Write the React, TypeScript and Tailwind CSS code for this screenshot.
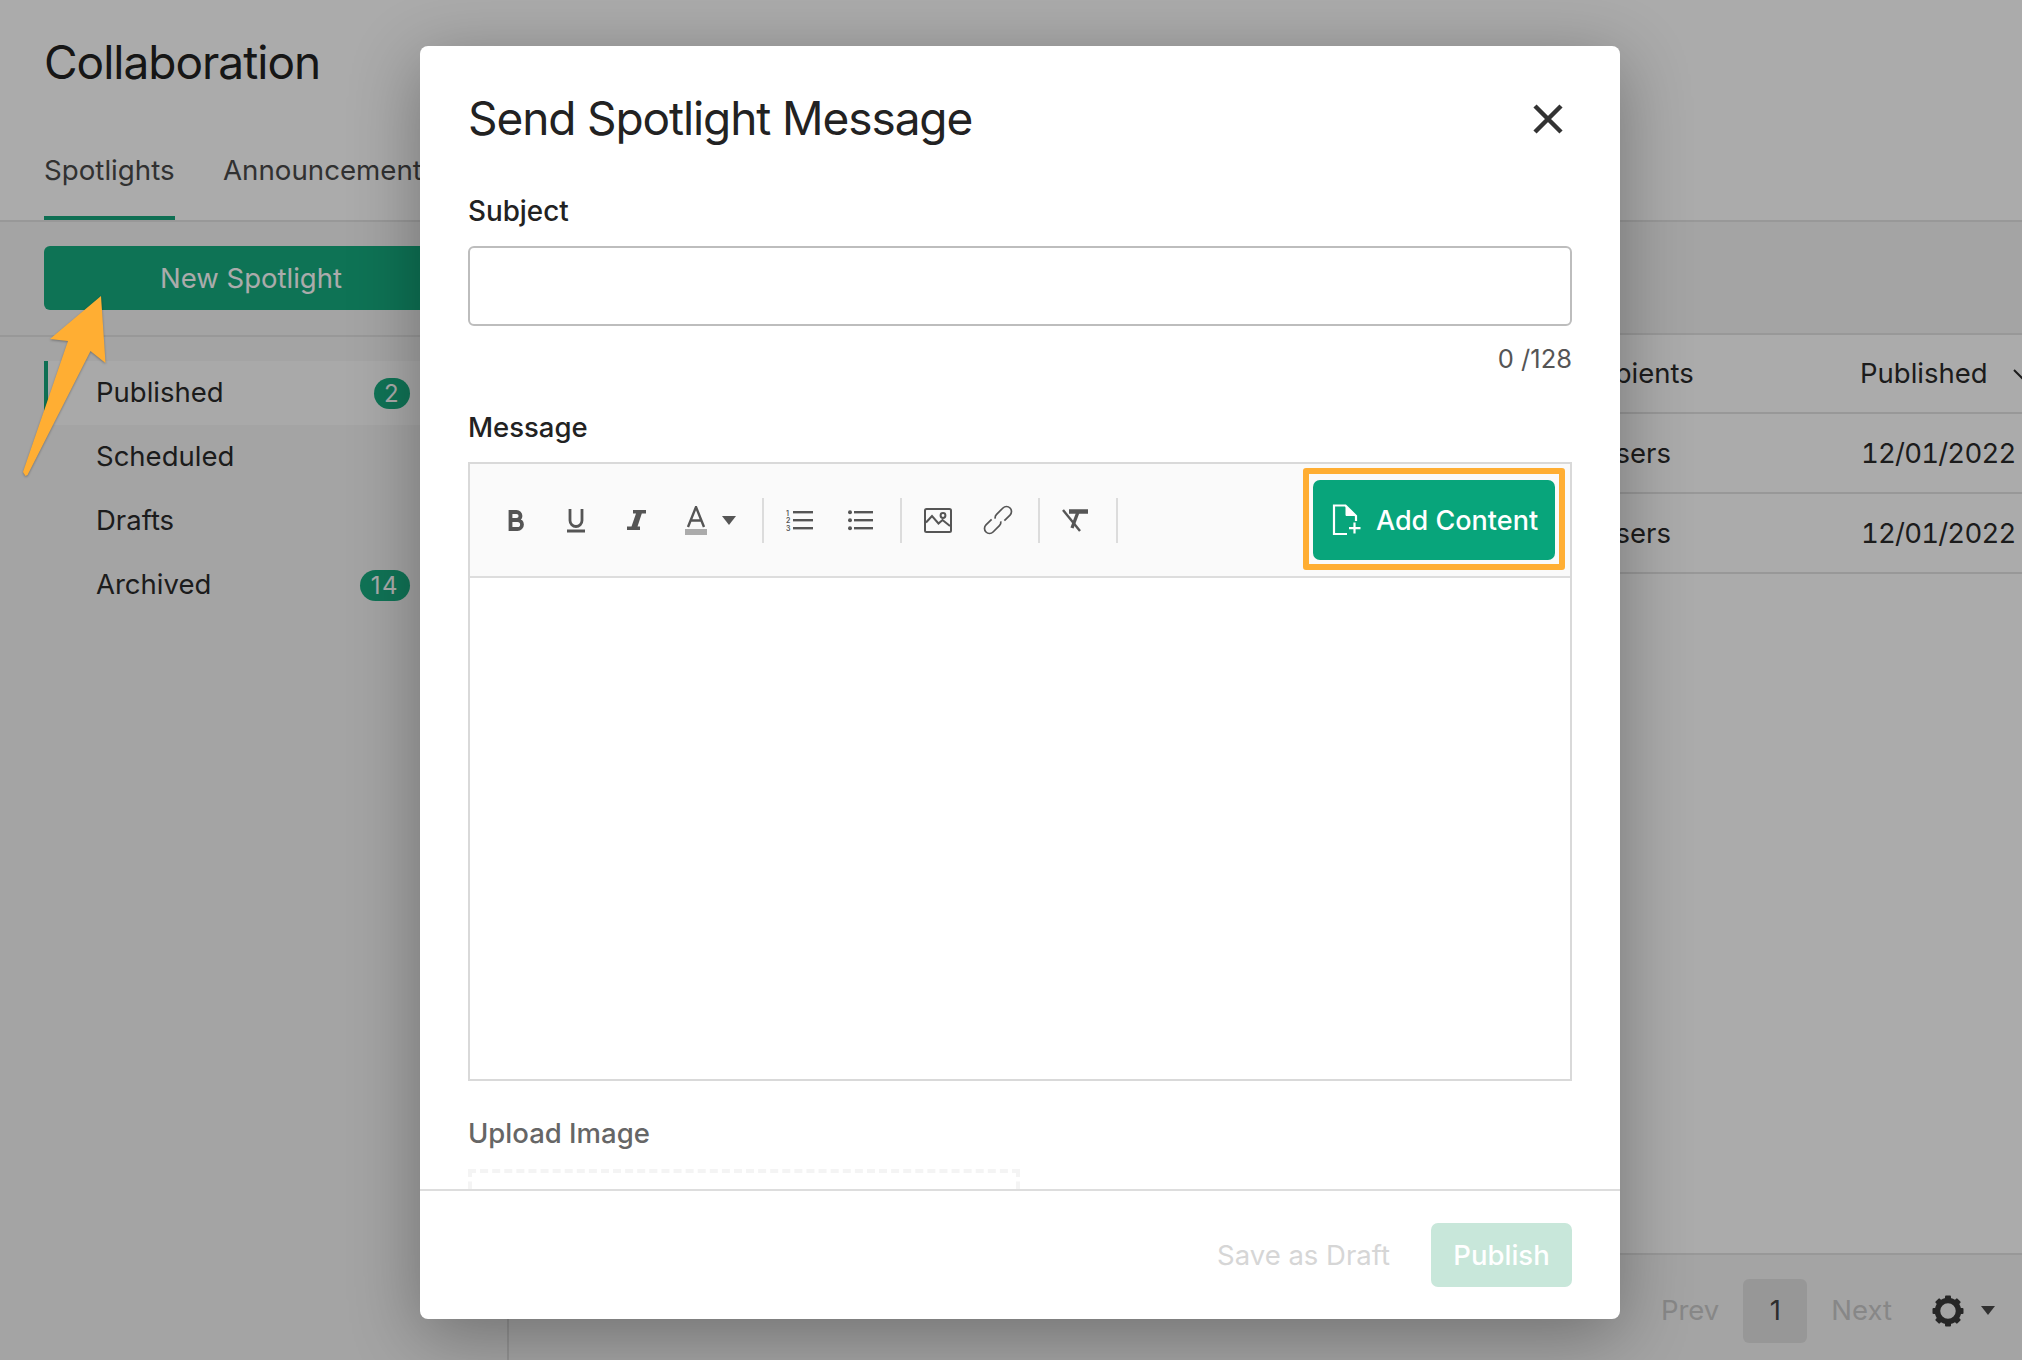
const ink = '#555555'

function Sep() {
  return <div className="w-[2px] h-[45px] bg-[#dcdcdc]" />
}

function Slot({ children, w = 'w-[60px]' }: { children: React.ReactNode; w?: string }) {
  return <div className={'flex items-center justify-center ' + w}>{children}</div>
}

function FormatButtons() {
  return (
    <div className="flex items-center h-[45px] pl-[16px] pr-[10px]">
      <Slot>
        <svg className="ml-[2px]" width="18" height="21" viewBox="0 0 18 21" fill="none" stroke={ink} strokeWidth="3.8">
          <path d="M2.500 2h6a3.900 3.900 0 0 1 0 8h-6zM2.500 10h7a4.500 4.500 0 0 1 0 9h-7z" />
        </svg>
      </Slot>
      <Slot>
        <svg width="20" height="25" viewBox="0 0 20 25" fill="none" stroke={ink}>
          <path d="M4 1v11.500a6 6 0 0 0 12 0V1" strokeWidth="2.800" />
          <path d="M1 23h18" strokeWidth="3" />
        </svg>
      </Slot>
      <Slot>
        <svg width="19" height="20" viewBox="0 0 19 20" fill={ink}>
          <path d="M6 0h13v3.500h-4.200L10.500 16.500H13V20H0v-3.500h4.500L9 3.500H6z" />
        </svg>
      </Slot>
      <Slot w="w-[86px]">
        <div className="flex items-center gap-[15px] pl-[2px]">
          <svg width="22" height="29" viewBox="0 0 22 29" fill="none">
            <path d="M3 21 11 1l8 20M6 14.500h10" stroke={ink} strokeWidth="2.400" />
            <rect x="0" y="23" width="22" height="6" fill="#ababab" />
          </svg>
          <svg width="14" height="9" viewBox="0 0 14 9" fill={ink}>
            <path d="M0 0h14L7 9z" />
          </svg>
        </div>
      </Slot>
    </div>
  )
}

function ListButtons() {
  return (
    <div className="flex items-center h-[45px] pl-[5px] pr-[9px]">
      <Slot>
        <svg width="27" height="22" viewBox="0 0 27 22" fill={ink}>
          <text x="0" y="6.500" fontSize="7" fontFamily="Inter, sans-serif" fontWeight="600">1</text>
          <text x="0" y="14" fontSize="7" fontFamily="Inter, sans-serif" fontWeight="600">2</text>
          <text x="0" y="21.500" fontSize="7" fontFamily="Inter, sans-serif" fontWeight="600">3</text>
          <rect x="7" y="2" width="20" height="2.400" />
          <rect x="7" y="10" width="20" height="2.400" />
          <rect x="7" y="18" width="20" height="2.400" />
        </svg>
      </Slot>
      <Slot w="w-[62px]">
        <svg width="25" height="22" viewBox="0 0 25 22" fill={ink}>
          <circle cx="2" cy="3.200" r="2" />
          <circle cx="2" cy="11.200" r="2" />
          <circle cx="2" cy="19.200" r="2" />
          <rect x="6" y="2" width="19" height="2.400" />
          <rect x="6" y="10" width="19" height="2.400" />
          <rect x="6" y="18" width="19" height="2.400" />
        </svg>
      </Slot>
    </div>
  )
}

function InsertButtons() {
  return (
    <div className="flex items-center h-[45px] pl-[6px] pr-[10px]">
      <Slot>
        <svg width="28" height="25" viewBox="0 0 28 25" fill="none" stroke={ink} strokeWidth="2">
          <rect x="1" y="1" width="26" height="23" rx="1.500" />
          <path d="M2 14.500 8 8l6.500 7.500 4-3.500L26 18" />
          <circle cx="19" cy="7.500" r="2.400" />
        </svg>
      </Slot>
      <Slot>
        <svg className="overflow-visible" width="30" height="30" viewBox="0 0 30 30" fill="none" stroke={ink} strokeWidth="1.700">
          <g transform="rotate(-45 15 15)">
            <path d="M11 10H3a5 5 0 0 0 0 10h9a5 5 0 0 0 4-2" />
            <path d="M19 20h8a5 5 0 0 0 0-10h-9a5 5 0 0 0-4 2" />
          </g>
        </svg>
      </Slot>
    </div>
  )
}

function ClearButton() {
  return (
    <div className="flex items-center h-[45px] pl-[5px] pr-[11px]">
      <Slot>
        <svg width="26" height="23" viewBox="0 0 26 23" fill="none" stroke={ink}>
          <path d="M7 2.500h19" strokeWidth="4.500" />
          <path d="M16 3 10 19" strokeWidth="3.400" />
          <path d="M1 1 18 22" strokeWidth="2.400" />
        </svg>
      </Slot>
    </div>
  )
}

function FileAdd() {
  return (
    <svg width="30" height="32" viewBox="0 0 30 32" fill="none" stroke="#ffffff" strokeWidth="2.200">
      <path d="M15 30H2V1.500h11.500L24 12v5" />
      <path d="M14 2v9.500h9z" fill="#ffffff" strokeWidth="1" />
      <path d="M22.500 18.500v11M17 24.200h11.500" />
    </svg>
  )
}

function Gear() {
  const teeth = [0, 45, 90, 135, 180, 225, 270, 315]
  return (
    <svg width="34" height="34" viewBox="0 0 34 34" fill="none">
      <circle cx="17" cy="17" r="10.500" stroke="#3a3a3a" strokeWidth="5.500" />
      {teeth.map(a => (
        <rect key={a} x="14" y="1.500" width="6" height="5" rx="1" fill="#3a3a3a" transform={`rotate(${a} 17 17)`} />
      ))}
    </svg>
  )
}

function NavRow({ label, count, active }: { label: string; count?: string; active?: boolean }) {
  return (
    <div className={'flex items-center h-[64px] pl-[48px] pr-[97px] text-[27.500px] text-[#2b2b2b] border-l-[4px] ' + (active ? 'bg-[#fdfdfd] border-[#15a67c]' : 'border-transparent')}>
      <span className="flex-1">{label}</span>
      {count && (
        <span className={'h-[31px] min-w-[36px] rounded-full bg-[#18ac80] text-white text-[24px] leading-[31px] text-center tracking-[1.500px] ' + (count.length > 1 ? 'px-[11px]' : 'px-[8px]')}>{count}</span>
      )}
    </div>
  )
}

function TableRow({ who, when }: { who: string; when: string }) {
  return (
    <div className="flex items-center h-[80px] pt-[1px] pl-[1046px] border-b-2 border-[#e3e3e3] text-[27.500px] text-[#2b2b2b]">
      <span className="w-[306px] shrink-0">{who}</span>
      <span className="whitespace-nowrap tabular-nums tracking-[-0.800px]">{when}</span>
    </div>
  )
}

function Background() {
  return (
    <div className="flex flex-col w-[2022px] h-[1360px] bg-white">
      <div className="h-[222px] px-[44px] border-b-2 border-[#e3e3e3] shrink-0">
        <h1 className="pt-[31px] h-[126px] text-[46px] leading-[62px] tracking-[-1px] text-[#222222]">Collaboration</h1>
        <div className="flex gap-[48px] text-[27.700px] leading-[44px] text-[#4a4a4a]">
          <div className="w-[131px] h-[94px] pt-[22px] border-b-[4px] border-[#15a67c] whitespace-nowrap">Spotlights</div>
          <div className="pt-[22px]">Announcements</div>
        </div>
      </div>
      <div className="flex flex-1">
        <aside className="w-[509px] shrink-0 border-r-2 border-[#dcdcdc] bg-[#f5f5f5]">
          <div className="h-[115px] pt-[24px] px-[44px] border-b-2 border-[#e3e3e3]">
            <button className="w-[414px] h-[64px] pt-[1px] rounded-[6px] bg-[#15ac7f] text-white text-[27.500px]">New Spotlight</button>
          </div>
          <div className="pt-[24px] pl-[44px]">
            <NavRow label="Published" count="2" active />
            <NavRow label="Scheduled" />
            <NavRow label="Drafts" />
            <NavRow label="Archived" count="14" />
          </div>
        </aside>
        <main className="flex flex-col flex-1 min-w-0 overflow-hidden">
          <div className="h-[113px] bg-[#f5f5f5] border-b-2 border-[#e3e3e3] shrink-0" />
          <div className="flex items-center h-[79px] pl-[1050px] border-b-2 border-[#e3e3e3] text-[27.500px] text-[#2b2b2b]">
            <span className="w-[301px] shrink-0">Recipients</span>
            <span className="whitespace-nowrap shrink-0">Published</span>
            <svg className="ml-[24px] shrink-0" width="20" height="12" viewBox="0 0 20 12" fill="none" stroke="#2b2b2b" strokeWidth="2">
              <path d="M2 2l8 8 8-8" />
            </svg>
          </div>
          <TableRow who="All Users" when="12/01/2022" />
          <TableRow who="All Users" when="12/01/2022" />
          <div className="flex-1" />
          <div className="flex items-center justify-end h-[107px] pt-[6px] pr-[27px] bg-[#f5f5f5] border-t-2 border-[#e3e3e3] text-[27.500px] shrink-0">
            <span className="text-[#c9c9c9]">Prev</span>
            <span className="flex items-center justify-center w-[64px] h-[64px] mx-[24px] rounded-[6px] bg-[#e2e2e2] text-[#444444]">1</span>
            <span className="text-[#c9c9c9]">Next</span>
            <span className="ml-[39px]"><Gear /></span>
            <svg className="ml-[16px]" width="14" height="9" viewBox="0 0 14 9" fill="#4a4a4a"><path d="M0 0h14L7 9z" /></svg>
          </div>
        </main>
      </div>
    </div>
  )
}

function Modal() {
  return (
    <div className="flex flex-col w-[1200px] h-[1273px] rounded-[8px] bg-white shadow-[0_16px_70px_rgba(0,0,0,0.32)] overflow-hidden">
      <div className="flex-1 min-h-0 overflow-hidden px-[48px]">
        <div className="flex items-center justify-between h-[124px] pt-[20px]">
          <h2 className="text-[46px] leading-[56px] tracking-[-1.100px] text-[#222222]">Send Spotlight Message</h2>
          <svg width="30" height="30" viewBox="0 0 30 30" fill="none" stroke="#333333" strokeWidth="4.500" className="mr-[9px] mt-[2px]">
            <path d="M2 2l26 26M28 2 2 28" />
          </svg>
        </div>
        <label className="block mt-[23px] text-[27.800px] leading-[36px] font-medium text-[#222222]">Subject</label>
        <div className="mt-[17px] h-[80px] rounded-[6px] border-2 border-[#bdbdbd]" />
        <div className="mt-[17px] text-right text-[25.500px] leading-[32px] text-[#555555]">0 /128</div>
        <label className="block mt-[34px] text-[27.500px] leading-[36px] font-medium text-[#222222]">Message</label>
        <div className="mt-[17px] h-[619px] border-2 border-[#d9d9d9]">
          <div className="flex items-center h-[114px] bg-[#fafafa] border-b-2 border-[#dddddd]">
            <FormatButtons />
            <Sep />
            <ListButtons />
            <Sep />
            <InsertButtons />
            <Sep />
            <ClearButton />
            <Sep />
            <div className="self-start ml-auto mt-[4px] mr-[5px] pt-[6px] px-[4px] pb-[4px] border-[6px] border-[#ffae33] rounded-[3px]">
              <button className="flex items-center gap-[14px] w-[242px] h-[80px] pl-[19px] rounded-[7px] bg-[#08a57b] text-white text-[27px] font-medium whitespace-nowrap">
                <FileAdd />
                <span className="mt-[3px]">Add Content</span>
              </button>
            </div>
          </div>
        </div>
        <label className="block mt-[34px] text-[27.500px] leading-[36px] font-medium text-[#666666]">Upload Image</label>
        <div className="mt-[18px] w-[552px] h-[120px] border-[4px] border-dashed border-[#f4f4f4]" />
      </div>
      <div className="flex items-center justify-end gap-[41px] h-[130px] px-[48px] border-t-2 border-[#dddddd] shrink-0">
        <span className="mt-[2px] text-[27.500px] text-[#d6d6d6]">Save as Draft</span>
        <button className="w-[141px] h-[64px] pt-[2px] rounded-[7px] bg-[#c8e7da] text-white text-[27.500px] font-medium">Publish</button>
      </div>
    </div>
  )
}

export default function App() {
  return (
    <div className="relative w-[2022px] h-[1360px] overflow-hidden [font-family:Inter,sans-serif]">
      <Background />
      <div className="absolute inset-0 bg-black/33 pl-[420px] pt-[46px]">
        <Modal />
      </div>
      <svg className="absolute left-[15px] top-[290px] drop-shadow-[0_1px_1px_rgba(0,0,0,0.3)]" width="100" height="192" viewBox="15 290 100 192" fill="#ffae33">
        <path d="M101 296 50 339l18 2-45 131 2.500 4 2-1 63-124 15 12z" />
      </svg>
    </div>
  )
}
